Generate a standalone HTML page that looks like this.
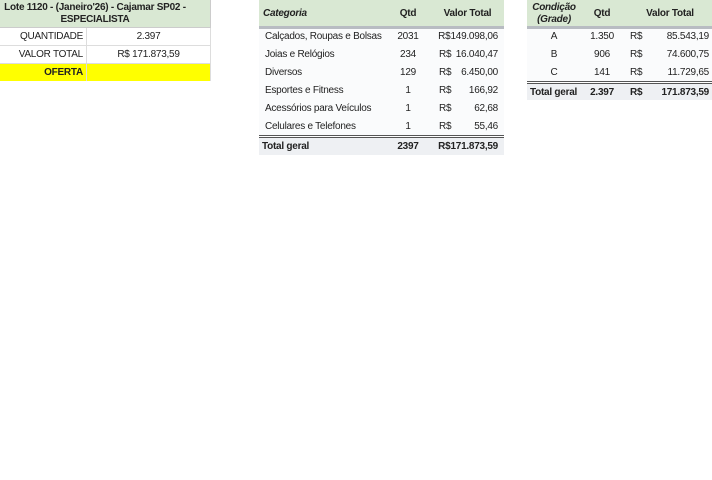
<!DOCTYPE html>
<html><head><style>
body{margin:0;width:712px;height:480px;background:#fff;font-family:"Liberation Sans",Arial,sans-serif;font-size:10px;letter-spacing:-0.25px;color:#222;position:relative;overflow:hidden}
.a{position:absolute;white-space:nowrap}
.r{text-align:right}.c{text-align:center}
.b{font-weight:bold}.i{font-style:italic}
</style></head><body>
<!-- left table -->
<div class="a" style="left:0;top:0;width:210px;height:27px;background:#d9e8d3;border-right:1px solid #ccc;border-bottom:1px solid #ccc"></div>
<div class="a c b" style="left:0;top:2px;width:190px;line-height:12px">Lote 1120 - (Janeiro'26) - Cajamar SP02 -<br>ESPECIALISTA</div>
<div class="a" style="left:0;top:28px;width:210px;height:17px;border-bottom:1px solid #ddd;border-right:1px solid #ddd"></div>
<div class="a" style="left:0;top:46px;width:210px;height:17px;border-bottom:1px solid #ddd;border-right:1px solid #ddd"></div>
<div class="a" style="left:0;top:64px;width:210px;height:17px;background:#ffff00;border-right:1px solid #ddd"></div>
<div class="a" style="left:86px;top:28px;width:1px;height:53px;background:#ddd"></div>
<div class="a r" style="left:0;top:31px;width:83px">QUANTIDADE</div>
<div class="a c" style="left:87px;top:31px;width:123px">2.397</div>
<div class="a r" style="left:0;top:49px;width:83px">VALOR TOTAL</div>
<div class="a c" style="left:87px;top:49px;width:123px">R$ 171.873,59</div>
<div class="a r b" style="left:0;top:67px;width:83px">OFERTA</div>
<!-- middle table -->
<div class="a" style="left:259px;top:0;width:245px;height:26px;background:#d9e8d3;border-bottom:3px solid #b8bcc2"></div>
<div class="a" style="left:259px;top:29px;width:245px;height:106px;background:#fafbfc"></div>
<div class="a" style="left:259px;top:135px;width:245px;height:1px;background:#555"></div>
<div class="a" style="left:259px;top:137px;width:245px;height:1px;background:#555"></div>
<div class="a" style="left:259px;top:138px;width:245px;height:17px;background:#eef0f3"></div>
<div class="a b i" style="left:263px;top:8px">Categoria</div>
<div class="a b c" style="left:393px;top:8px;width:30px">Qtd</div>
<div class="a b c" style="left:430px;top:8px;width:75px">Valor Total</div>
<div class="a" style="left:265px;top:31px">Calçados, Roupas e Bolsas</div>
<div class="a" style="left:265px;top:49px">Joias e Relógios</div>
<div class="a" style="left:265px;top:67px">Diversos</div>
<div class="a" style="left:265px;top:85px">Esportes e Fitness</div>
<div class="a" style="left:265px;top:103px">Acessórios para Veículos</div>
<div class="a" style="left:265px;top:121px">Celulares e Telefones</div>
<div class="a c" style="left:393px;top:31px;width:30px">2031</div>
<div class="a c" style="left:393px;top:49px;width:30px">234</div>
<div class="a c" style="left:393px;top:67px;width:30px">129</div>
<div class="a c" style="left:393px;top:85px;width:30px">1</div>
<div class="a c" style="left:393px;top:103px;width:30px">1</div>
<div class="a c" style="left:393px;top:121px;width:30px">1</div>
<div class="a r" style="left:430px;top:31px;width:68px">R$149.098,06</div>
<div class="a" style="left:439px;top:49px">R$</div><div class="a r" style="left:430px;top:49px;width:68px">16.040,47</div>
<div class="a" style="left:439px;top:67px">R$</div><div class="a r" style="left:430px;top:67px;width:68px">6.450,00</div>
<div class="a" style="left:439px;top:85px">R$</div><div class="a r" style="left:430px;top:85px;width:68px">166,92</div>
<div class="a" style="left:439px;top:103px">R$</div><div class="a r" style="left:430px;top:103px;width:68px">62,68</div>
<div class="a" style="left:439px;top:121px">R$</div><div class="a r" style="left:430px;top:121px;width:68px">55,46</div>
<div class="a b" style="left:262px;top:141px">Total geral</div>
<div class="a b c" style="left:393px;top:141px;width:30px">2397</div>
<div class="a b r" style="left:430px;top:141px;width:68px">R$171.873,59</div>
<!-- right table -->
<div class="a" style="left:527px;top:0;width:185px;height:26px;background:#d9e8d3;border-bottom:3px solid #b8bcc2"></div>
<div class="a" style="left:527px;top:29px;width:185px;height:52px;background:#fafbfc"></div>
<div class="a" style="left:527px;top:81px;width:185px;height:1px;background:#555"></div>
<div class="a" style="left:527px;top:83px;width:185px;height:1px;background:#555"></div>
<div class="a" style="left:527px;top:84px;width:185px;height:16px;background:#eef0f3"></div>
<div class="a b i c" style="left:527px;top:2px;width:54px;line-height:12px">Condição<br>(Grade)</div>
<div class="a b c" style="left:587px;top:8px;width:30px">Qtd</div>
<div class="a b c" style="left:630px;top:8px;width:80px">Valor Total</div>
<div class="a c" style="left:527px;top:31px;width:54px">A</div>
<div class="a c" style="left:527px;top:49px;width:54px">B</div>
<div class="a c" style="left:527px;top:67px;width:54px">C</div>
<div class="a c" style="left:587px;top:31px;width:30px">1.350</div>
<div class="a c" style="left:587px;top:49px;width:30px">906</div>
<div class="a c" style="left:587px;top:67px;width:30px">141</div>
<div class="a" style="left:630px;top:31px">R$</div><div class="a r" style="left:630px;top:31px;width:79px">85.543,19</div>
<div class="a" style="left:630px;top:49px">R$</div><div class="a r" style="left:630px;top:49px;width:79px">74.600,75</div>
<div class="a" style="left:630px;top:67px">R$</div><div class="a r" style="left:630px;top:67px;width:79px">11.729,65</div>
<div class="a b" style="left:530px;top:87px">Total geral</div>
<div class="a b c" style="left:587px;top:87px;width:30px">2.397</div>
<div class="a b" style="left:630px;top:87px">R$</div><div class="a b r" style="left:630px;top:87px;width:79px">171.873,59</div>
</body></html>
